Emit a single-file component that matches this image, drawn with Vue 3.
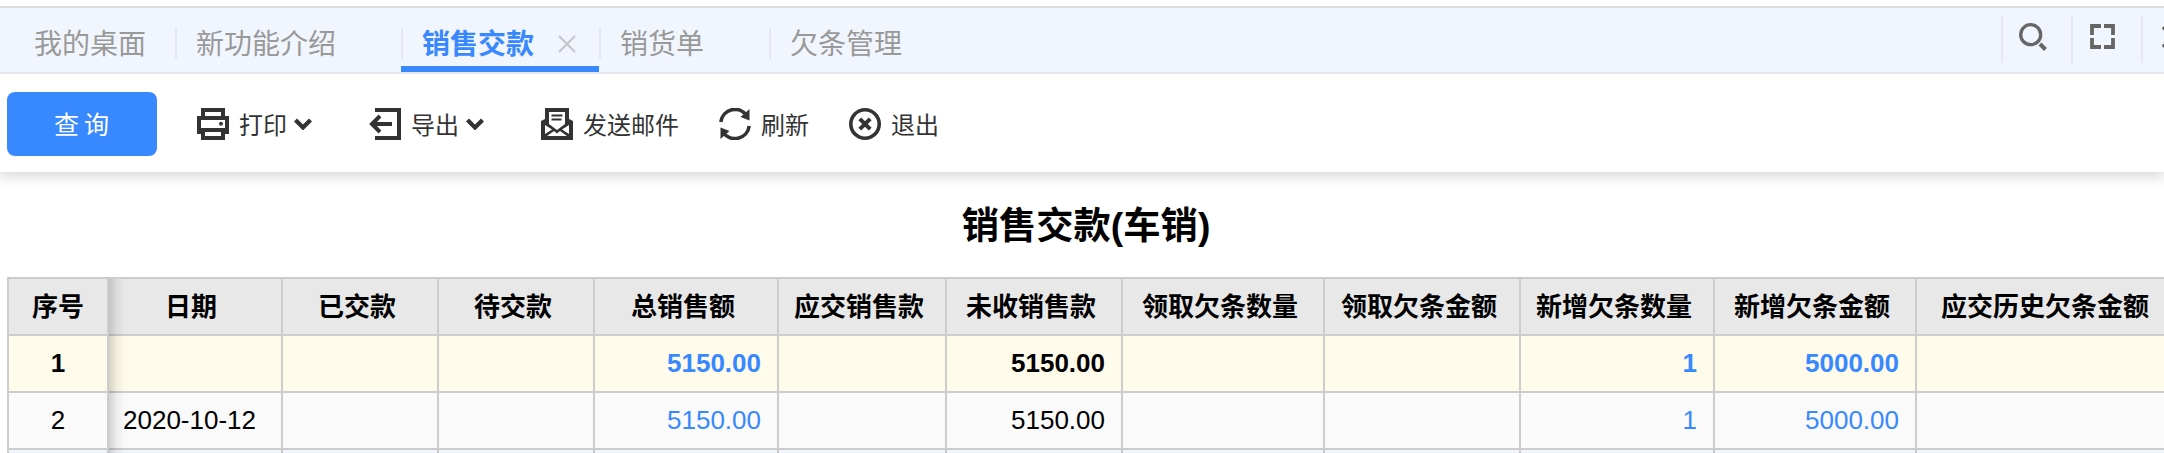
<template>
    <div class="page">
        <div class="tab-bar">
            <div class="tabs">
                <div v-for="tab in tabs" :key="tab" class="tab" :class="{ active: tab === activeTab }" @click="activeTab = tab">
                    <span>{{ tab }}</span>
                    <svg v-if="tab === activeTab" class="close" viewBox="0 0 18 18">
                        <path d="M1 1L17 17M17 1L1 17" />
                    </svg>
                </div>
            </div>
            <div class="tools">
                <div class="tool">
                    <svg class="search" viewBox="0 0 28 28">
                        <circle cx="11.7" cy="11.7" r="10" />
                        <path d="M21 21L26.5 26.5" class="handle" />
                    </svg>
                </div>
                <div class="tool">
                    <svg class="full" viewBox="0 0 25 25">
                        <path d="M11 2H2V11M14 2H23V11M11 23H2V14M14 23H23V14" />
                    </svg>
                </div>
                <div class="tool">
                    <svg class="close-all" viewBox="0 0 24 24">
                        <path d="M2 2L22 22M22 2L2 22" />
                    </svg>
                </div>
            </div>
        </div>

        <div class="toolbar">
            <button class="query">查询</button>
            <div class="action print">
                <svg class="icon" viewBox="0 0 32 32">
                    <path d="M6 9V2H26V9M6 24H2V10H30V24H26" class="line" />
                    <path d="M6 22V30H26V22Z" class="line" />
                    <path d="M4 0H28V8H24V4H8V8H4ZM2 8H30V12H2ZM2 20H30V24H2Z" />
                    <circle cx="24" cy="15.7" r="2" />
                </svg>
                <span>打印</span>
                <svg class="arrow" viewBox="0 0 18 12"><path d="M1.5 2L9 9.5L16.5 2" /></svg>
            </div>
            <div class="action export">
                <svg class="icon" viewBox="0 0 32 32">
                    <path d="M6 2H30V30H6M23 16H3M11 8L3 16L11 24" class="line" />
                </svg>
                <span>导出</span>
                <svg class="arrow" viewBox="0 0 18 12"><path d="M1.5 2L9 9.5L16.5 2" /></svg>
            </div>
            <div class="action mail">
                <svg class="icon" viewBox="0 0 32 32">
                    <path d="M4 11V0H28V11L32 13V32H0V13ZM8 4V16L16 22L24 16V4ZM4 17V26L11 21.5ZM28 17V26L21 21.5ZM6 28H26L19 23L16 25.5L13 23Z" fill-rule="evenodd" />
                    <path d="M10.5 7.5H21.5M10.5 11.5H20.5" class="thin" />
                </svg>
                <span>发送邮件</span>
            </div>
            <div class="action refresh">
                <svg class="icon" viewBox="0 0 32 32">
                    <path d="M1.8 14A14.3 14.3 0 0 1 28 8M30.2 18A14.3 14.3 0 0 1 4 24" class="arc" />
                    <path d="M30.5 1V12.5L21.5 9ZM1.5 31V19.5L10.5 23Z" />
                </svg>
                <span>刷新</span>
            </div>
            <div class="action quit">
                <svg class="icon" viewBox="0 0 32 32">
                    <circle cx="16" cy="16" r="14.2" class="ring" />
                    <path d="M10.8 10.8L21.2 21.2M21.2 10.8L10.8 21.2" class="line" />
                </svg>
                <span>退出</span>
            </div>
        </div>

        <div class="content">
            <h1>销售交款(车销)</h1>
            <table>
                <colgroup>
                    <col v-for="col in columns" :key="col.title" :style="{ width: col.width + 'px' }" />
                </colgroup>
                <thead>
                    <tr>
                        <th v-for="col in columns" :key="col.title">{{ col.title }}</th>
                    </tr>
                </thead>
                <tbody>
                    <tr v-for="(row, index) in rows" :key="index" :class="{ total: index === 0, even: index === 2 }">
                        <td v-for="(col, i) in columns" :key="col.title" :class="{ link: col.link, date: i === 1 }">{{ row[col.key] }}</td>
                    </tr>
                </tbody>
            </table>
            <div class="fixed-shadow"></div>
        </div>

        <div class="watermark">
            <div v-for="(mark, index) in marks" :key="index" class="mark" :style="{ left: mark.x + 'px', top: mark.y + 'px' }">朱洽1971<br>10141037</div>
        </div>
    </div>
</template>

<script setup>
import { ref } from 'vue';

const tabs = ['我的桌面', '新功能介绍', '销售交款', '销货单', '欠条管理'];
const activeTab = ref('销售交款');

const columns = [
    { title: '序号', key: 'no', width: 100 },
    { title: '日期', key: 'date', width: 174 },
    { title: '已交款', key: 'paid', width: 156 },
    { title: '待交款', key: 'pending', width: 156 },
    { title: '总销售额', key: 'total', width: 184, link: true },
    { title: '应交销售款', key: 'due', width: 168 },
    { title: '未收销售款', key: 'unpaid', width: 176 },
    { title: '领取欠条数量', key: 'takeCount', width: 202 },
    { title: '领取欠条金额', key: 'takeAmount', width: 196 },
    { title: '新增欠条数量', key: 'newCount', width: 194, link: true },
    { title: '新增欠条金额', key: 'newAmount', width: 202, link: true },
    { title: '应交历史欠条金额', key: 'history', width: 264 }
];

const rows = [
    { no: 1, total: '5150.00', unpaid: '5150.00', newCount: 1, newAmount: '5000.00' },
    { no: 2, date: '2020-10-12', total: '5150.00', unpaid: '5150.00', newCount: 1, newAmount: '5000.00' },
    {}
];

const marks = [];
for (let y = 75; y < 453; y += 256) {
    for (let x = 90; x < 2000; x += 619) {
        marks.push({ x, y });
    }
}
</script>

<style>
body {
    margin: 0;
    overflow: hidden;
}
</style>

<style scoped>
.page {
    position: relative;
    width: 2164px;
    height: 453px;
    overflow: hidden;
    box-sizing: border-box;
    padding-top: 6px;
    background: #fff;
    font-family: "Liberation Sans", "Noto Sans CJK SC", sans-serif;
}
.tab-bar {
    display: flex;
    justify-content: space-between;
    height: 64px;
    border-top: 2px solid #dcdddf;
    border-bottom: 2px solid #e6e8ef;
    background: #f1f6fe;
}
.tabs {
    display: flex;
}
.tab {
    position: relative;
    display: flex;
    box-sizing: border-box;
    height: 64px;
    padding: 0 64px 0 22px;
    font-size: 28px;
    line-height: 71px;
    color: #999;
    white-space: nowrap;
    cursor: pointer;
}
.tab span {
    height: 63px;
    margin-top: 1px;
    margin-left: -1px;
    margin-right: 1px;
}
.tab:first-child {
    padding: 0 28px 0 35px;
}
.tab + .tab::before {
    content: "";
    position: absolute;
    left: 0;
    top: 20px;
    width: 2px;
    height: 31px;
    background: #e6e8ef;
}
.tab.active {
    color: #3888ff;
    font-weight: bold;
    border-bottom: 6px solid #3888ff;
}
.close {
    position: absolute;
    right: 23px;
    top: 27px;
    width: 18px;
    height: 18px;
    stroke: #c4c6ca;
    stroke-width: 2.2;
}
.tools {
    display: flex;
    padding-top: 8px;
    width: 163px;
}
.tool {
    flex: none;
    box-sizing: border-box;
    width: 70px;
    height: 47px;
    border-left: 2px solid #e6e8ef;
}
.tool svg {
    display: block;
    fill: none;
    stroke: #666;
    stroke-width: 3.8;
}
.tool .search {
    width: 28px;
    height: 28px;
    margin: 7px 0 0 16px;
    stroke-width: 3.3;
}
.tool .handle {
    stroke-width: 4;
}
.tool .full {
    width: 25px;
    height: 25px;
    margin: 8px 0 0 17px;
}
.tool .close-all {
    width: 24px;
    height: 24px;
    margin: 9px 0 0 18px;
}
.toolbar {
    position: relative;
    z-index: 1;
    display: flex;
    box-sizing: border-box;
    height: 98px;
    padding: 18px 0 0 7px;
    background: #fff;
    box-shadow: 0 4px 12px 1px rgba(0, 0, 0, 0.15);
    clip-path: inset(0 0 -30px 0);
}
.query {
    width: 150px;
    height: 64px;
    padding: 0 0 2px 4px;
    border: none;
    border-radius: 8px;
    background: #3888ff;
    color: #fff;
    font-family: inherit;
    font-size: 25px;
    letter-spacing: 5px;
    cursor: pointer;
}
.action {
    display: flex;
    align-items: center;
    height: 64px;
    font-size: 24px;
    color: #333;
    cursor: pointer;
}
.action span {
    margin: -1px 0 0 10px;
}
.print {
    margin-left: 40px;
}
.export {
    margin-left: 57px;
}
.mail {
    margin-left: 57px;
}
.refresh {
    margin-left: 40px;
}
.quit {
    margin-left: 40px;
}
.icon {
    width: 32px;
    height: 32px;
    fill: #333;
}
.line, .arc, .thin, .ring {
    fill: none;
    stroke: #333;
    stroke-width: 4;
}
.arc {
    stroke-width: 3.6;
}
.ring {
    stroke-width: 3.6;
}
.quit .line {
    stroke-width: 4;
}
.thin {
    stroke-width: 2;
}
.arrow {
    width: 18px;
    height: 12px;
    margin-left: 7px;
    fill: none;
    stroke: #333;
    stroke-width: 4.2;
}
.content {
    position: relative;
    padding-left: 7px;
}
h1 {
    width: 2158px;
    margin: 0;
    height: 105px;
    box-sizing: border-box;
    padding-top: 27px;
    font-size: 37.3px;
    line-height: 54px;
    text-align: center;
}
table {
    width: 2174px;
    table-layout: fixed;
    border-collapse: separate;
    border-spacing: 0;
    border-left: 2px solid #ccc;
    border-top: 2px solid #ccc;
    font-size: 26px;
}
th, td {
    box-sizing: border-box;
    height: 57px;
    border-right: 2px solid #ccc;
    border-bottom: 2px solid #ccc;
    line-height: 36px;
    white-space: nowrap;
}
th {
    padding: 0 6px 0 0;
    background: #e8e8e8;
}
th:nth-child(2) {
    padding-right: 8px;
}
td {
    padding: 0 16px 2px 0;
    text-align: right;
    background: #fafafa;
}
th:first-child, td:first-child {
    padding-left: 0;
    padding-right: 0;
    text-align: center;
}
.date {
    padding: 0 0 2px 14px;
    text-align: left;
}
.total td {
    background: #fffbea;
    font-weight: bold;
}
.even td {
    background: #eff5ff;
}
td.link {
    color: #3888ff;
}
/* shadow of the frozen first column */
.fixed-shadow {
    position: absolute;
    left: 109px;
    top: 107px;
    width: 16px;
    height: 180px;
    background: linear-gradient(to right, rgba(0, 0, 0, 0.16), rgba(0, 0, 0, 0.05) 50%, rgba(0, 0, 0, 0));
}
.watermark {
    position: absolute;
    inset: 0;
    z-index: 2;
    overflow: hidden;
    pointer-events: none;
}
.mark {
    position: absolute;
    width: 165px;
    font-size: 36px;
    line-height: 56px;
    font-weight: 300;
    color: rgba(0, 0, 0, 0.012);
    transform: rotate(-18deg);
    white-space: nowrap;
}
</style>
